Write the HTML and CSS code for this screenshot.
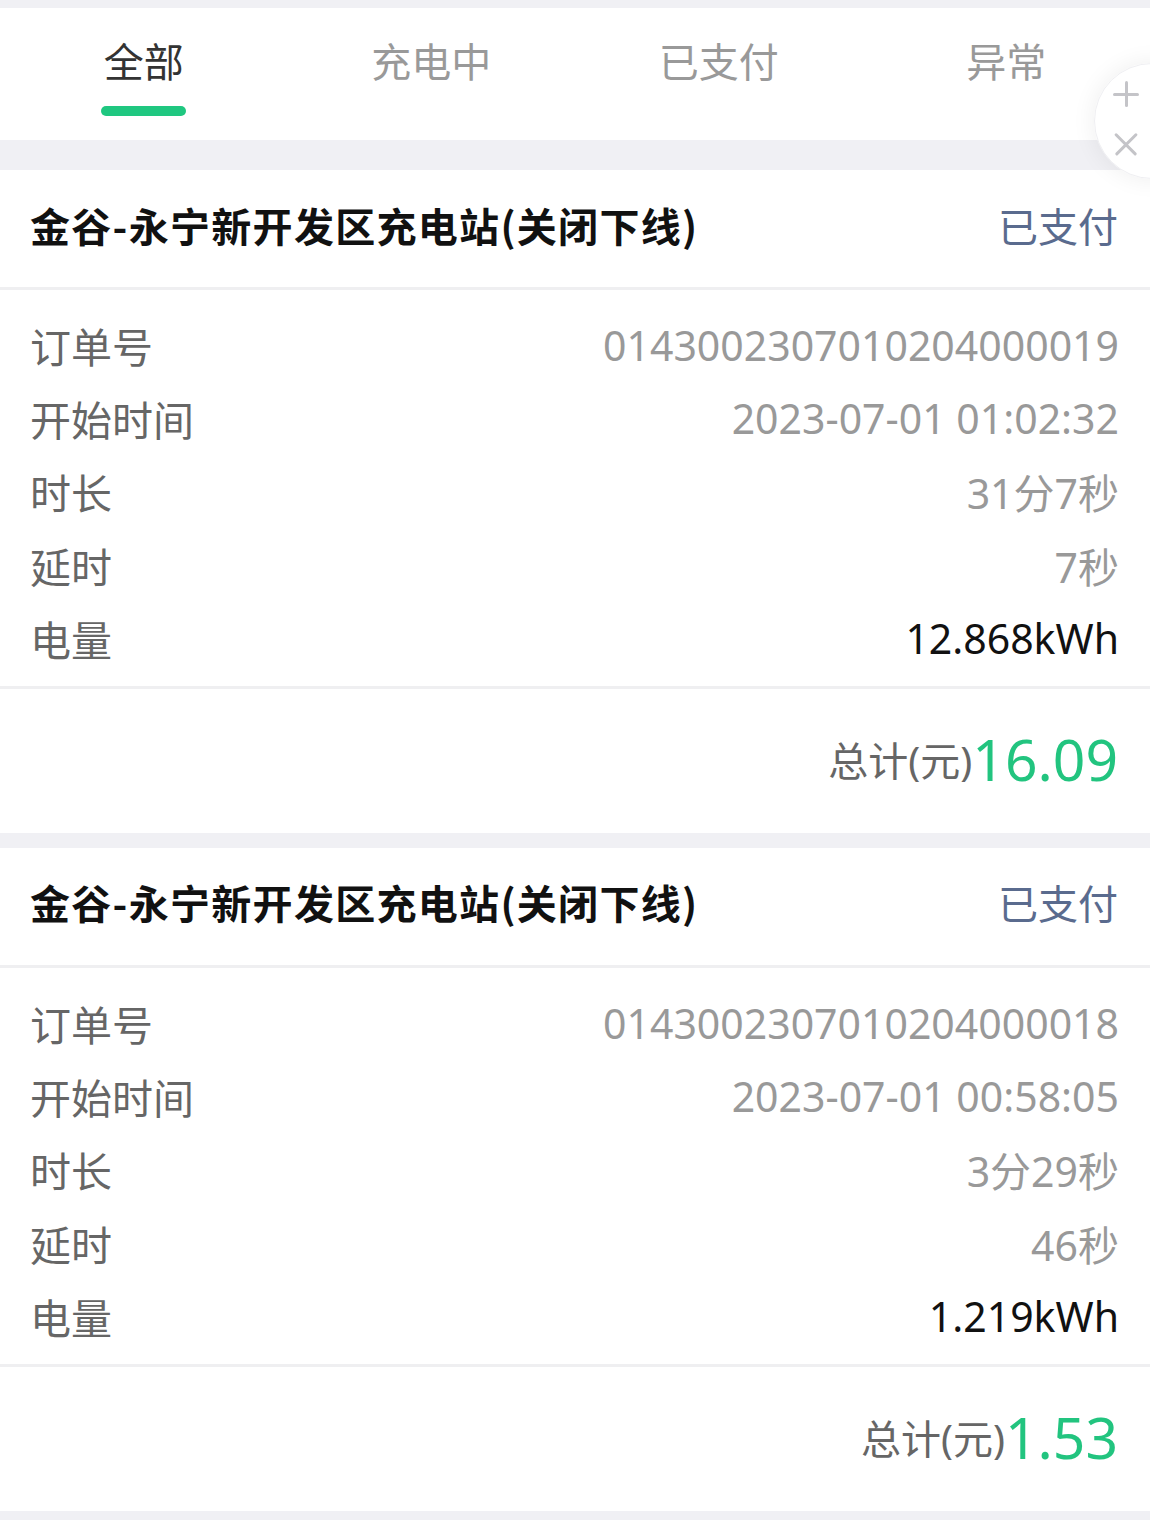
FILE: index.html
```html
<!DOCTYPE html>
<html lang="zh-CN">
<head>
    <meta charset="UTF-8">
    <meta name="viewport" content="width=device-width,initial-scale=1.0">
    <title>充电订单</title>
    <link rel="stylesheet" href="styles.css">
</head>
<body>
    <div class="cd_tabs">
        <div class="cd_tab cd_tab-active"><span class="cd_tab-text">全部</span><i class="cd_tab-bar"></i></div>
        <div class="cd_tab"><span class="cd_tab-text">充电中</span><i class="cd_tab-bar"></i></div>
        <div class="cd_tab"><span class="cd_tab-text">已支付</span><i class="cd_tab-bar"></i></div>
        <div class="cd_tab"><span class="cd_tab-text">异常</span><i class="cd_tab-bar"></i></div>
    </div>

    <div class="cd_float-wrap">
        <div class="cd_float">
            <span class="cd_float-plus"></span>
            <span class="cd_float-close"></span>
        </div>
    </div>

    <div class="cd_list">
        <div class="cd_card">
            <div class="cd_card-head">
                <span class="cd_card-title">金谷-永宁新开发区充电站(关闭下线)</span>
                <span class="cd_card-status">已支付</span>
            </div>
            <div class="cd_card-body">
                <div class="cd_row"><span class="cd_row-label">订单号</span><span class="cd_row-value">0143002307010204000019</span></div>
                <div class="cd_row"><span class="cd_row-label">开始时间</span><span class="cd_row-value">2023-07-01 01:02:32</span></div>
                <div class="cd_row"><span class="cd_row-label">时长</span><span class="cd_row-value">31分7秒</span></div>
                <div class="cd_row"><span class="cd_row-label">延时</span><span class="cd_row-value">7秒</span></div>
                <div class="cd_row"><span class="cd_row-label">电量</span><span class="cd_row-value cd_row-value_dark">12.868kWh</span></div>
            </div>
            <div class="cd_card-foot">
                <span class="cd_total-label">总计(元)</span><span class="cd_total-num">16.09</span>
            </div>
        </div>

        <div class="cd_card">
            <div class="cd_card-head">
                <span class="cd_card-title">金谷-永宁新开发区充电站(关闭下线)</span>
                <span class="cd_card-status">已支付</span>
            </div>
            <div class="cd_card-body">
                <div class="cd_row"><span class="cd_row-label">订单号</span><span class="cd_row-value">0143002307010204000018</span></div>
                <div class="cd_row"><span class="cd_row-label">开始时间</span><span class="cd_row-value">2023-07-01 00:58:05</span></div>
                <div class="cd_row"><span class="cd_row-label">时长</span><span class="cd_row-value">3分29秒</span></div>
                <div class="cd_row"><span class="cd_row-label">延时</span><span class="cd_row-value">46秒</span></div>
                <div class="cd_row"><span class="cd_row-label">电量</span><span class="cd_row-value cd_row-value_dark">1.219kWh</span></div>
            </div>
            <div class="cd_card-foot">
                <span class="cd_total-label">总计(元)</span><span class="cd_total-num">1.53</span>
            </div>
        </div>
    </div>
</body>
</html>
```

FILE: styles.css
```css
*{ margin: 0; padding: 0; box-sizing: border-box;}
html,body{ background: #f0f0f4; overflow: hidden;}
body{ position: relative; padding-top: 8px; font-family: "Noto Sans", "Noto Sans CJK SC", sans-serif; color: #333; -webkit-font-smoothing: antialiased;}

/* tabs */
.cd_tabs{ display: flex; background: #fff; padding: 26px 0 24px;}
.cd_tab{ flex: 1; display: flex; flex-direction: column; align-items: center; gap: 16px;}
.cd_tab-text{ font-size: 40px; line-height: 56px; color: #999;}
.cd_tab-bar{ display: block; width: 85px; height: 10px; border-radius: 5px;}
.cd_tab-active .cd_tab-text{ color: #333;}
.cd_tab-active .cd_tab-bar{ background: #1fc780;}

/* floating button, half off the right edge */
.cd_float-wrap{ position: absolute; right: 0; top: 40px; width: 90px; height: 162px; overflow: hidden;}
.cd_float{ position: absolute; left: 34px; top: 23px; width: 116px; height: 116px; border-radius: 50%; background: rgba(255,255,255,0.96); border: 1px solid #efeff2; box-shadow: 0 0 24px rgba(0,0,0,0.07);}
.cd_float-plus,.cd_float-close{ position: absolute; left: 18px; width: 26px; height: 26px;}
.cd_float-plus{ top: 17px;}
.cd_float-close{ top: 68px; width: 24px; height: 24px; left: 19px; transform: rotate(45deg);}
.cd_float-plus:before,.cd_float-plus:after,.cd_float-close:before,.cd_float-close:after{ content: ""; position: absolute; background: #c4c4c8; border-radius: 2px;}
.cd_float-plus:before,.cd_float-close:before{ left: 0; right: 0; top: 50%; height: 3px; margin-top: -1.5px;}
.cd_float-plus:after,.cd_float-close:after{ top: 0; bottom: 0; left: 50%; width: 3px; margin-left: -1.5px;}
.cd_float-close:before{ left: -3px; right: -3px;}
.cd_float-close:after{ top: -3px; bottom: -3px;}

/* cards */
.cd_list{ padding-top: 30px;}
.cd_card{ background: #fff; margin-bottom: 15px;}
.cd_card-head{ display: flex; justify-content: space-between; align-items: center; height: 120px; padding: 0 32px 8px 30px; border-bottom: 3px solid #efeff1;}
.cd_card-title{ font-size: 40px; font-weight: 700; color: #111; font-family: "Noto Sans CJK SC", sans-serif; letter-spacing: 1.3px;}
.cd_card-status{ font-size: 40px; color: #5a6b8e;}

.cd_card-body{ padding: 18px 31px 11px 30px; border-bottom: 3px solid #efeff1;}
.cd_row{ display: flex; justify-content: space-between; align-items: center; height: 73.4px; font-size: 41px;}
.cd_row-label{ color: #666;}
.cd_row-value{ color: #999;}
.cd_row-value_dark{ color: #111;}

.cd_card-foot{ display: flex; justify-content: flex-end; align-items: center; height: 144px; padding: 0 32px 3px 30px;}
.cd_total-label{ font-size: 40px; color: #666;}
.cd_total-num{ font-size: 57px; color: #22c47f; line-height: 1;}
```
